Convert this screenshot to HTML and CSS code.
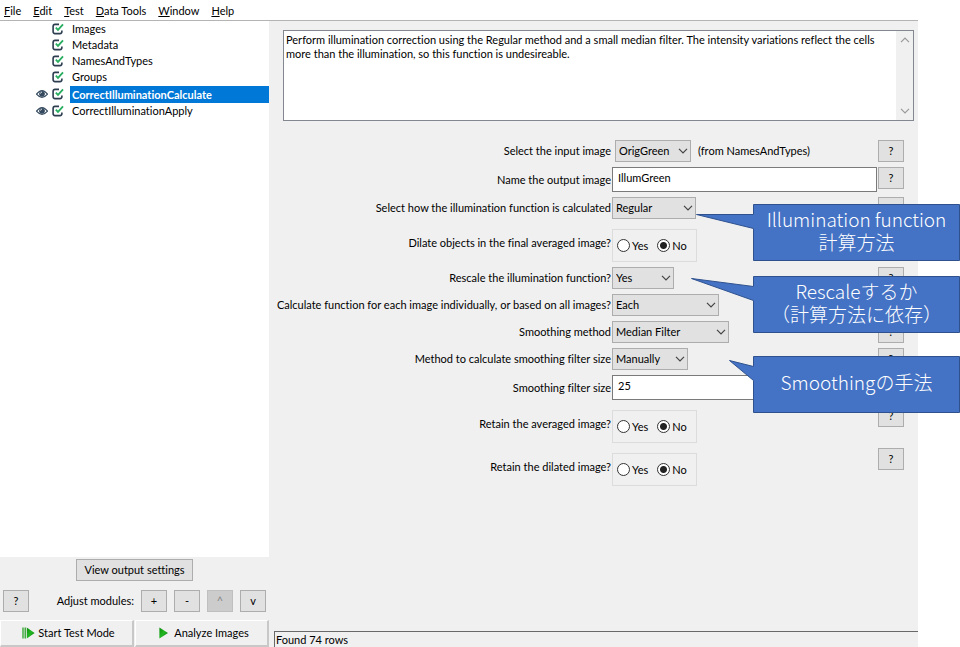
FILE: index.html
```html
<!DOCTYPE html>
<html lang="en">
<head>
<meta charset="utf-8">
<title>CellProfiler</title>
<link rel="stylesheet" href="styles.css">
</head>
<body>
<svg class="defs" aria-hidden="true">
  <symbol id="check" viewBox="0 0 12 12">
    <path d="M7 1.4H3Q1.1 1.4 1.1 3.4V8.6Q1.1 10.6 3 10.6H8Q9.9 10.6 9.9 8.6V7.6" fill="none" stroke="#2c3e50" stroke-width="1.6"/>
    <path d="M3.8 4.6L6 6.9L11 1.4" fill="none" stroke="#27ae60" stroke-width="1.8"/>
  </symbol>
  <symbol id="eye" viewBox="0 0 12 12">
    <path d="M0.5 6.2Q6-1 11.5 6.2Q6 12.6 0.5 6.2Z" fill="#fff" stroke="#34495e" stroke-width="1.2"/>
    <circle cx="6" cy="5.8" r="2.9" fill="#34495e"/>
    <path d="M4.4 5.6Q4.6 4.2 6 4" fill="none" stroke="#fff" stroke-width="0.8"/>
  </symbol>
  <symbol id="chevron" viewBox="0 0 10 6">
    <path d="M1 0.8L5 4.8L9 0.8" fill="none" stroke="currentColor" stroke-width="1.2"/>
  </symbol>
  <linearGradient id="green" x1="0" y1="0" x2="1" y2="1">
    <stop offset="0" stop-color="#0c8a0c"/><stop offset="0.5" stop-color="#22b822"/><stop offset="1" stop-color="#066006"/>
  </linearGradient>
</svg>

<nav class="menubar">
  <button type="button"><u>F</u>ile</button>
  <button type="button"><u>E</u>dit</button>
  <button type="button"><u>T</u>est</button>
  <button type="button"><u>D</u>ata Tools</button>
  <button type="button"><u>W</u>indow</button>
  <button type="button"><u>H</u>elp</button>
</nav>

<div class="app">
  <aside class="sidebar">
    <ul class="modules">
      <li><span></span><svg><use href="#check"/></svg><span class="name">Images</span></li>
      <li><span></span><svg><use href="#check"/></svg><span class="name">Metadata</span></li>
      <li><span></span><svg><use href="#check"/></svg><span class="name">NamesAndTypes</span></li>
      <li><span></span><svg><use href="#check"/></svg><span class="name">Groups</span></li>
      <li class="selected"><svg><use href="#eye"/></svg><svg><use href="#check"/></svg><span class="name">CorrectIlluminationCalculate</span></li>
      <li><svg><use href="#eye"/></svg><svg><use href="#check"/></svg><span class="name">CorrectIlluminationApply</span></li>
    </ul>
    <div class="output"><button type="button" class="btn">View output settings</button></div>
    <div class="adjust">
      <button type="button" class="btn square">?</button>
      <span class="adjust-label">Adjust modules:</span>
      <button type="button" class="btn square">+</button>
      <button type="button" class="btn square">-</button>
      <button type="button" class="btn square" disabled>^</button>
      <button type="button" class="btn square">v</button>
    </div>
    <div class="run">
      <button type="button"><svg class="play" viewBox="0 0 13 12"><path d="M1 0.5V11.5M3.2 0.5V11.5" stroke="#1a9a1a" stroke-width="1.2"/><path d="M4.8 0.4L12.6 6L4.8 11.6Z" fill="url(#green)"/></svg>Start Test Mode</button>
      <button type="button"><svg class="play" viewBox="0 0 13 12"><path d="M1.4 0.4L10 6L1.4 11.6Z" fill="url(#green)"/></svg>Analyze Images</button>
    </div>
  </aside>

  <main class="main">
    <div class="notes">
      <textarea aria-label="Module notes">Perform illumination correction using the Regular method and a small median filter. The intensity variations reflect the cells more than the illumination, so this function is undesireable.</textarea>
      <div class="scroll"><svg class="up"><use href="#chevron"/></svg><svg><use href="#chevron"/></svg></div>
    </div>

    <form class="settings">
      <label for="input">Select the input image</label>
      <div class="control inset"><span class="select w-s"><select id="input"><option>OrigGreen</option></select><svg><use href="#chevron"/></svg></span><span>(from NamesAndTypes)</span></div>
      <button type="button" class="btn square">?</button>

      <label for="output">Name the output image</label>
      <input class="text" id="output" type="text" value="IllumGreen">
      <button type="button" class="btn square">?</button>

      <label for="how">Select how the illumination function is calculated</label>
      <div class="control"><span class="select w-m"><select id="how"><option>Regular</option></select><svg><use href="#chevron"/></svg></span></div>
      <button type="button" class="btn square">?</button>

      <span class="label" id="dilate">Dilate objects in the final averaged image?</span>
      <div class="radios" role="radiogroup" aria-labelledby="dilate"><label><input type="radio" name="dilate">Yes</label><label><input type="radio" name="dilate" checked>No</label></div>
      <button type="button" class="btn square">?</button>

      <label for="rescale">Rescale the illumination function?</label>
      <div class="control"><span class="select w-xs"><select id="rescale"><option>Yes</option></select><svg><use href="#chevron"/></svg></span></div>
      <button type="button" class="btn square">?</button>

      <label for="each">Calculate function for each image individually, or based on all images?</label>
      <div class="control"><span class="select w-l"><select id="each"><option>Each</option></select><svg><use href="#chevron"/></svg></span></div>
      <span></span>

      <label for="smooth">Smoothing method</label>
      <div class="control"><span class="select w-xl"><select id="smooth"><option>Median Filter</option></select><svg><use href="#chevron"/></svg></span></div>
      <button type="button" class="btn square">?</button>

      <label for="sizing">Method to calculate smoothing filter size</label>
      <div class="control"><span class="select w-s"><select id="sizing"><option>Manually</option></select><svg><use href="#chevron"/></svg></span></div>
      <button type="button" class="btn square">?</button>

      <label for="size">Smoothing filter size</label>
      <input class="text" id="size" type="text" value="25">
      <span></span>

      <span class="label" id="avg">Retain the averaged image?</span>
      <div class="radios" role="radiogroup" aria-labelledby="avg"><label><input type="radio" name="avg">Yes</label><label><input type="radio" name="avg" checked>No</label></div>
      <button type="button" class="btn square">?</button>

      <span class="label" id="dil">Retain the dilated image?</span>
      <div class="radios" role="radiogroup" aria-labelledby="dil"><label><input type="radio" name="dil">Yes</label><label><input type="radio" name="dil" checked>No</label></div>
      <button type="button" class="btn square">?</button>
    </form>

    <div class="status">Found 74 rows</div>
  </main>
</div>

<div class="callout first" lang="ja">
  <svg viewBox="0 0 264 57"><path d="M57.5 0.5H263.5V56.5H57.5V24.5L0.5 10.5H57.5Z"/></svg>
  <p>Illumination function<br>計算方法</p>
</div>
<div class="callout second" lang="ja">
  <svg viewBox="0 0 269 57"><path d="M62.5 0.5H268.5V56.5H62.5V24.5L0.5 2.5L62.5 10.5Z"/></svg>
  <p>Rescaleするか<br>（計算方法に依存）</p>
</div>
<div class="callout third" lang="ja">
  <svg viewBox="0 0 231 57"><path d="M24.5 0.5H230.5V56.5H24.5V24.5L0.5 4.5L24.5 10.5Z"/></svg>
  <p>Smoothingの手法</p>
</div>
</body>
</html>
```
FILE: styles.css
```css
* { box-sizing: border-box; }

body {
  margin: 0;
  min-height: 100vh;
  display: flex;
  flex-direction: column;
  position: relative;
  background: #fff;
  color: #000;
  font: 11px/14px Lato, "Open Sans", sans-serif;
  font-variant-ligatures: none;
}

button, input, select, textarea { font: inherit; font-variant-ligatures: none; color: inherit; margin: 0; }
.defs { position: absolute; width: 0; height: 0; }

.menubar { display: flex; gap: 12px; height: 20px; padding: 4px 4px 0; }
.menubar button { border: 0; padding: 0; background: none; height: 14px; }

.app {
  flex: 1;
  display: flex;
  margin-right: 42px;
  border-top: 1px solid #b4b4b4;
  background: #f0f0f0;
}

.sidebar { width: 269px; display: flex; flex-direction: column; }
.modules { flex: 1; margin: 0; padding: 0 0 0 36px; list-style: none; background: #fff; }
.modules li { display: grid; grid-template-columns: 12px 12px 1fr; column-gap: 4px; align-items: center; height: 16px; }
.modules svg { width: 12px; height: 12px; }
.modules .name { margin-left: 2px; padding-left: 2px; line-height: 16px; }
.modules .selected { height: 18px; }
.selected .name { background: #0078d7; color: #fff; font-weight: 700; line-height: 17px; }

.btn { border: 1px solid #adadad; background: #e1e1e1; padding: 0 7px; height: 22px; }
.btn:disabled { background: #ccc; border-color: #bfbfbf; color: #838383; }
.square { width: 26px; padding: 0; }

.output { display: flex; justify-content: center; padding: 2px 0 9px; }
.adjust { display: flex; align-items: center; gap: 7px; padding: 0 3px; }
.adjust-label { flex: 1; text-align: right; }
.run { display: flex; gap: 1px; padding-top: 8px; }
.run button {
  flex: 1;
  display: flex;
  align-items: center;
  justify-content: center;
  gap: 3px;
  height: 27px;
  padding: 0 0 0 4px;
  border: solid;
  border-width: 1px 2px 2px 1px;
  border-color: #fff #c8c8c8 #c8c8c8 #fff;
  background: #f0f0f0;
}
.play { width: 13px; height: 12px; }

.main { flex: 1; display: flex; flex-direction: column; padding-left: 5px; }

.notes { display: flex; height: 91px; margin: 9px 4px 0 9px; border: 1px solid #828790; background: #fff; }
.notes textarea { flex: 1; border: 0; padding: 2px 10px 0 2px; resize: none; overflow: hidden; background: none; outline: 0; }
.scroll { width: 17px; display: flex; flex-direction: column; justify-content: space-between; align-items: center; padding: 6px 0; background: #f0f0f0; color: #999; }
.scroll svg { width: 10px; height: 6px; }
.scroll .up { transform: rotate(180deg); }

.settings {
  flex: 1;
  display: grid;
  grid-template-columns: 337px 1fr 26px;
  gap: 5px 1px;
  align-content: start;
  padding: 19px 14px 0 0;
}
.settings > label, .settings > .label { align-self: center; text-align: right; white-space: nowrap; }
.settings > .btn { align-self: start; }
.control { display: flex; align-items: center; gap: 7px; }
.inset { padding-left: 3px; }

.select { display: grid; align-items: center; height: 22px; }
.select > * { grid-area: 1 / 1; }
.select select { appearance: none; width: 100%; height: 22px; border: 1px solid #adadad; border-radius: 0; background: #e1e1e1; padding: 0 3px; }
.select svg { justify-self: end; width: 10px; height: 6px; margin-right: 3px; color: #444; pointer-events: none; }
.w-xs { width: 62px; }
.w-s { width: 76px; }
.w-m { width: 84px; }
.w-l { width: 107px; }
.w-xl { width: 117px; }

.text { width: 100%; height: 25px; border: 1px solid #7a7a7a; background: #fff; padding: 0 5px 4px; }

.radios { display: flex; align-items: center; gap: 9px; justify-self: start; height: 33px; margin-top: 5px; padding: 0 9px 0 4px; border: 1px solid #dcdcdc; }
.radios label { display: flex; align-items: center; gap: 2px; }
.radios input { appearance: none; width: 13px; height: 13px; border: 1px solid #333; border-radius: 50%; background: #fff; }
.radios input:checked { background: radial-gradient(circle, #222 3px, #fff 4px); }

.status { height: 16px; border: solid #696969; border-width: 1px 0 0 1px; line-height: 16px; padding-left: 1px; }

.callout { position: absolute; right: 0; height: 57px; display: grid; }
.callout > * { grid-area: 1 / 1; }
.callout svg { width: 100%; height: 57px; }
.callout path { fill: #4472c4; stroke: #2f528f; }
.callout p {
  justify-self: end;
  align-self: start;
  width: 207px;
  margin: 0;
  padding-top: 3px;
  color: #fff;
  text-align: center;
  white-space: nowrap;
  font: 300 19px/23px "Noto Sans CJK JP", sans-serif;
}
.first { top: 204px; width: 264px; }
.second { top: 276px; width: 269px; }
.third { top: 356px; width: 231px; }
.third p { padding-top: 14px; }
```
